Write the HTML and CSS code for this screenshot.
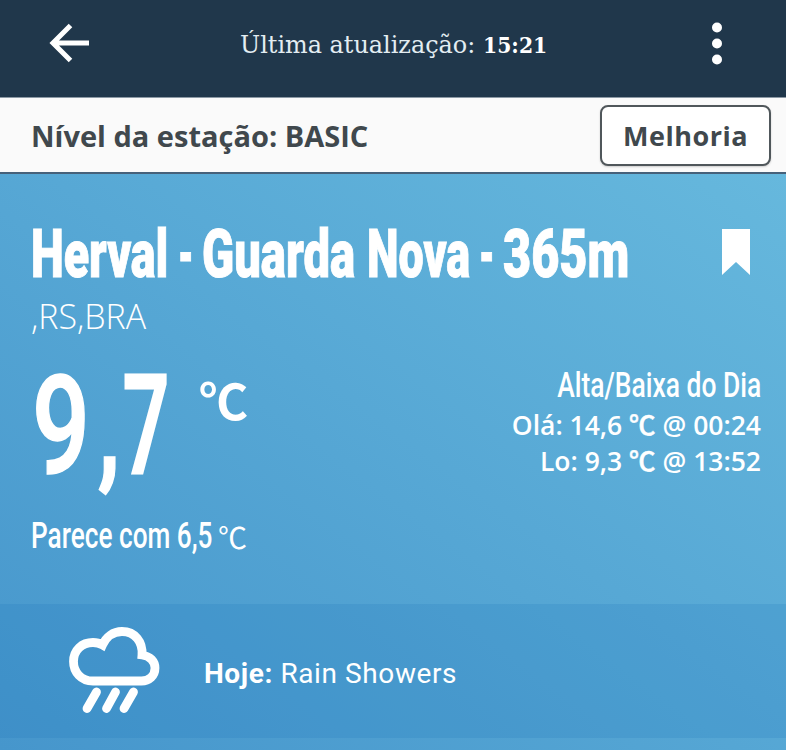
FILE: index.html
```html
<!DOCTYPE html>
<html lang="pt-BR">
<head>
<meta charset="utf-8">
<title>Herval - Guarda Nova</title>
<link rel="stylesheet" href="styles.css">
</head>
<body>
<header class="topbar">
  <svg class="back" width="40" height="40" viewBox="0 0 40 40"><path d="M21.500 2.500 4 20l17.500 17.500M4 20h36" /></svg>
  <p class="updated"><span class="updated-label">Última atualização:</span><b class="updated-time">15:21</b></p>
  <svg class="menu" width="12" height="44" viewBox="0 0 12 44"><circle cx="6" cy="5.500" r="5"/><circle cx="6" cy="21.500" r="5"/><circle cx="6" cy="37.500" r="5"/></svg>
</header>
<section class="level">
  <span class="level-label">Nível da estação: BASIC</span>
  <button class="upgrade">Melhoria</button>
</section>
<main class="weather">
  <div class="station">
    <h1 class="name"><span class="word herval">Herval</span> <span class="word dash">-</span> <span class="word guarda">Guarda</span> <span class="word nova">Nova</span> <span class="word dash">-</span> <span class="word altitude">365m</span></h1>
    <svg class="bookmark" width="28" height="47" viewBox="0 0 28 47"><path d="M0 0h28v46L14 33 0 46z"/></svg>
  </div>
  <p class="region"><span>,RS,BRA</span></p>
  <div class="readings">
    <div class="current"><span class="temp">9<span class="comma">,</span><span class="decimal">7</span></span><span class="unit">℃</span></div>
    <div class="range">
      <h2 class="range-title"><span>Alta/Baixa do Dia</span></h2>
      <p>Olá: 14,6 <span class="deg">℃</span> @ 00:24</p>
      <p>Lo: 9,3 <span class="deg">℃</span> @ 13:52</p>
    </div>
  </div>
  <p class="feels"><span class="feels-text">Parece com 6,5</span><span class="feels-unit">℃</span></p>
  <div class="forecast">
    <svg class="rain" width="92" height="88" viewBox="0 0 92 88"><path class="cloud" d="M25 54C13 54 5.500 45 5.500 34.500C5.500 23 14 15.500 25 15.500C29 15.500 32 16.500 34.500 18C38 10 45 4.500 54 4.500C67 4.500 75 15 74 28C82 29 87 34.500 87 41C87 49 81 54 73.500 54Z"/><path class="drops" d="M28.500 65 19 81.500M47.500 65 38.500 81.500M65.500 65 56 81.500"/></svg>
    <p class="forecast-text"><b>Hoje:</b> Rain Showers</p>
  </div>
</main>
</body>
</html>
```

FILE: styles.css
```css
* { box-sizing: border-box; margin: 0; padding: 0; }
body { width: 786px; height: 750px; overflow: hidden; font-family: "Open Sans", "Noto Sans CJK JP", sans-serif; color: #fff; background: #fafafa; display: flex; flex-direction: column; }
svg { display: block; flex: none; }
p, h1, h2, span { white-space: nowrap; }
.topbar { height: 98px; flex: none; background: #20374b; border-bottom: 1px solid #8c99a5; display: flex; align-items: flex-start; padding: 23px 63px 0 49px; }
.back path { fill: none; stroke: #fff; stroke-width: 5; }
.updated { flex: 1; display: flex; padding-left: 151px; font-family: "DejaVu Serif", serif; line-height: 43px; }
.updated-label { width: 243px; font-size: 25px; color: #e3edf2; font-stretch: condensed; transform: scaleX(1.063); transform-origin: left; }
.updated-time { font-size: 23px; transform: scaleX(.886); transform-origin: left; width: 64px; }
.menu { fill: #fff; margin-top: -1px; }
.level { height: 76px; flex: none; display: flex; align-items: center; justify-content: space-between; padding: 0 15px 0 31px; color: #40484d; border-bottom: 2px solid #46617a; font-weight: 700; font-size: 29px; }
.level-label { padding-top: 1px; }
.upgrade { width: 171px; height: 61px; border: 2px solid #50575b; border-radius: 8px; background: #fff; color: #40484d; font: 700 27px "Open Sans", sans-serif; letter-spacing: .5px; box-shadow: 0 1px 2px #ccc; }
.weather { flex: 1; background: linear-gradient(to top right, #4696cc, #66b8dd); }
.station { display: flex; justify-content: space-between; height: 116px; padding: 54px 36px 0 31px; }
.name { font: 900 67px/52px Roboto, sans-serif; width: 600px; display: flex; }
.word { flex: none; transform-origin: left; -webkit-text-stroke: 1px #fff; }
.herval { width: 147px; transform: scaleX(.695); }
.dash { width: 24px; transform: scaleX(.52); }
.guarda { width: 165px; transform: scaleX(.705); }
.nova { width: 112px; transform: scaleX(.67); }
.altitude { width: 120px; transform: scaleX(.725); }
.bookmark { fill: #fff; margin-top: 1px; }
.region { font-size: 35px; line-height: 52px; font-weight: 300; padding-left: 31px; height: 70px; }
.region span { display: inline-block; transform: scaleX(.97); transform-origin: left; }
.readings { height: 150px; display: flex; justify-content: space-between; padding: 5px 25px 0 32px; }
.current { display: flex; }
.temp { font: 500 138px/122px Roboto, sans-serif; width: 167px; transform: scaleX(.74); transform-origin: left; -webkit-text-stroke: 1.500px #fff; }
.comma { margin-left: 10px; }
.decimal { display: inline-block; margin-left: -12px; transform: scaleX(.8); transform-origin: right; -webkit-text-stroke: 3px #fff; }
.unit { font: 700 49px/68px "Noto Sans CJK JP", sans-serif; }
.range { text-align: right; font-size: 26.500px; line-height: 36px; font-weight: 600; margin-top: -2px; }
.range-title { font: 500 35px/46px Roboto, sans-serif; margin-bottom: -2px; }
.range-title span { display: inline-block; transform: scaleX(.755); transform-origin: right; }
.deg { font-weight: 500; -webkit-text-stroke: .500px #fff; }
.feels { display: flex; height: 94px; padding: 0 31px; line-height: 52px; }
.feels-text { font-family: Roboto, sans-serif; font-weight: 500; font-size: 37px; width: 187px; transform: scaleX(.708); transform-origin: left; }
.feels-unit { font-family: "Noto Sans CJK JP", sans-serif; font-weight: 400; font-size: 29px; }
.forecast { height: 134px; background: rgba(25, 115, 185, .17); display: flex; align-items: center; padding-left: 68px; gap: 44px; }
.cloud, .drops { fill: none; stroke: #fff; stroke-width: 8.800; }
.drops { stroke-linecap: round; }
.forecast-text { font: 400 28px/40px Roboto, sans-serif; letter-spacing: .600px; padding-top: 5px; }
```
